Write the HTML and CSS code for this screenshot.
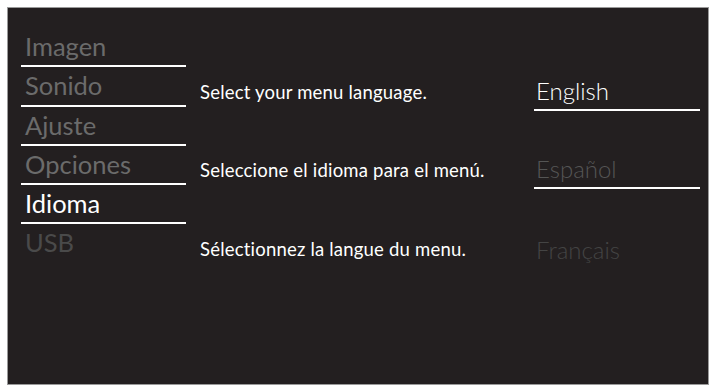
FILE: index.html
```html
<!DOCTYPE html>
<html>
<head>
<meta charset="utf-8">
<link rel="stylesheet" href="styles.css">
</head>
<body>
<div class="screen">
  <ul class="menu">
    <li class="item">Imagen</li>
    <li class="item">Sonido</li>
    <li class="item">Ajuste</li>
    <li class="item">Opciones</li>
    <li class="item active">Idioma</li>
    <li class="item dim last">USB</li>
  </ul>
  <div class="prompts">
    <div class="prompt">Select your menu language.</div>
    <div class="prompt">Seleccione el idioma para el menú.</div>
    <div class="prompt">Sélectionnez la langue du menu.</div>
  </div>
  <div class="langs">
    <div class="lang selected">English</div>
    <div class="lang">Español</div>
    <div class="lang dark last">Français</div>
  </div>
</div>
</body>
</html>
```

FILE: styles.css
```css
html, body {
  margin: 0;
  padding: 0;
  background: #ffffff;
}
body {
  padding: 7px 3px 2px 7px;
  font-family: "Lato", "Open Sans", sans-serif;
}
.screen {
  box-sizing: border-box;
  width: 702px;
  height: 378px;
  background: #231f20;
  border: 1px solid #9a9a9a;
  display: flex;
  padding: 20px 0 0 13px;
}
.menu {
  list-style: none;
  margin: 0;
  padding: 0;
  width: 165px;
}
.item {
  box-sizing: border-box;
  height: 39.3px;
  border-bottom: 2px solid #ffffff;
  color: #6b6b6b;
  font-size: 25.5px;
  line-height: 30px;
  padding: 3px 0 0 4px;
}
.item.active { color: #ffffff; }
.item.dim { color: #4a4a4a; }
.item.last { border-bottom: none; }
.prompts {
  margin-left: 14px;
  width: 334px;
  padding-top: 4px;
}
.prompt {
  box-sizing: border-box;
  height: 78.7px;
  display: flex;
  align-items: flex-end;
  padding-bottom: 8px;
  color: #ffffff;
  font-size: 18.5px;
  letter-spacing: 0.2px;
  line-height: 22px;
}
.langs {
  width: 166px;
  padding-top: 4px;
}
.lang {
  box-sizing: border-box;
  height: 78.7px;
  border-bottom: 2px solid #ffffff;
  display: flex;
  align-items: flex-end;
  padding: 0 0 3px 2px;
  color: #555555;
  font-size: 24px;
  font-weight: 300;
  line-height: 30px;
}
.lang.selected { color: #ffffff; }
.lang.dark { color: #444444; }
.lang.last { border-bottom: none; }
```
